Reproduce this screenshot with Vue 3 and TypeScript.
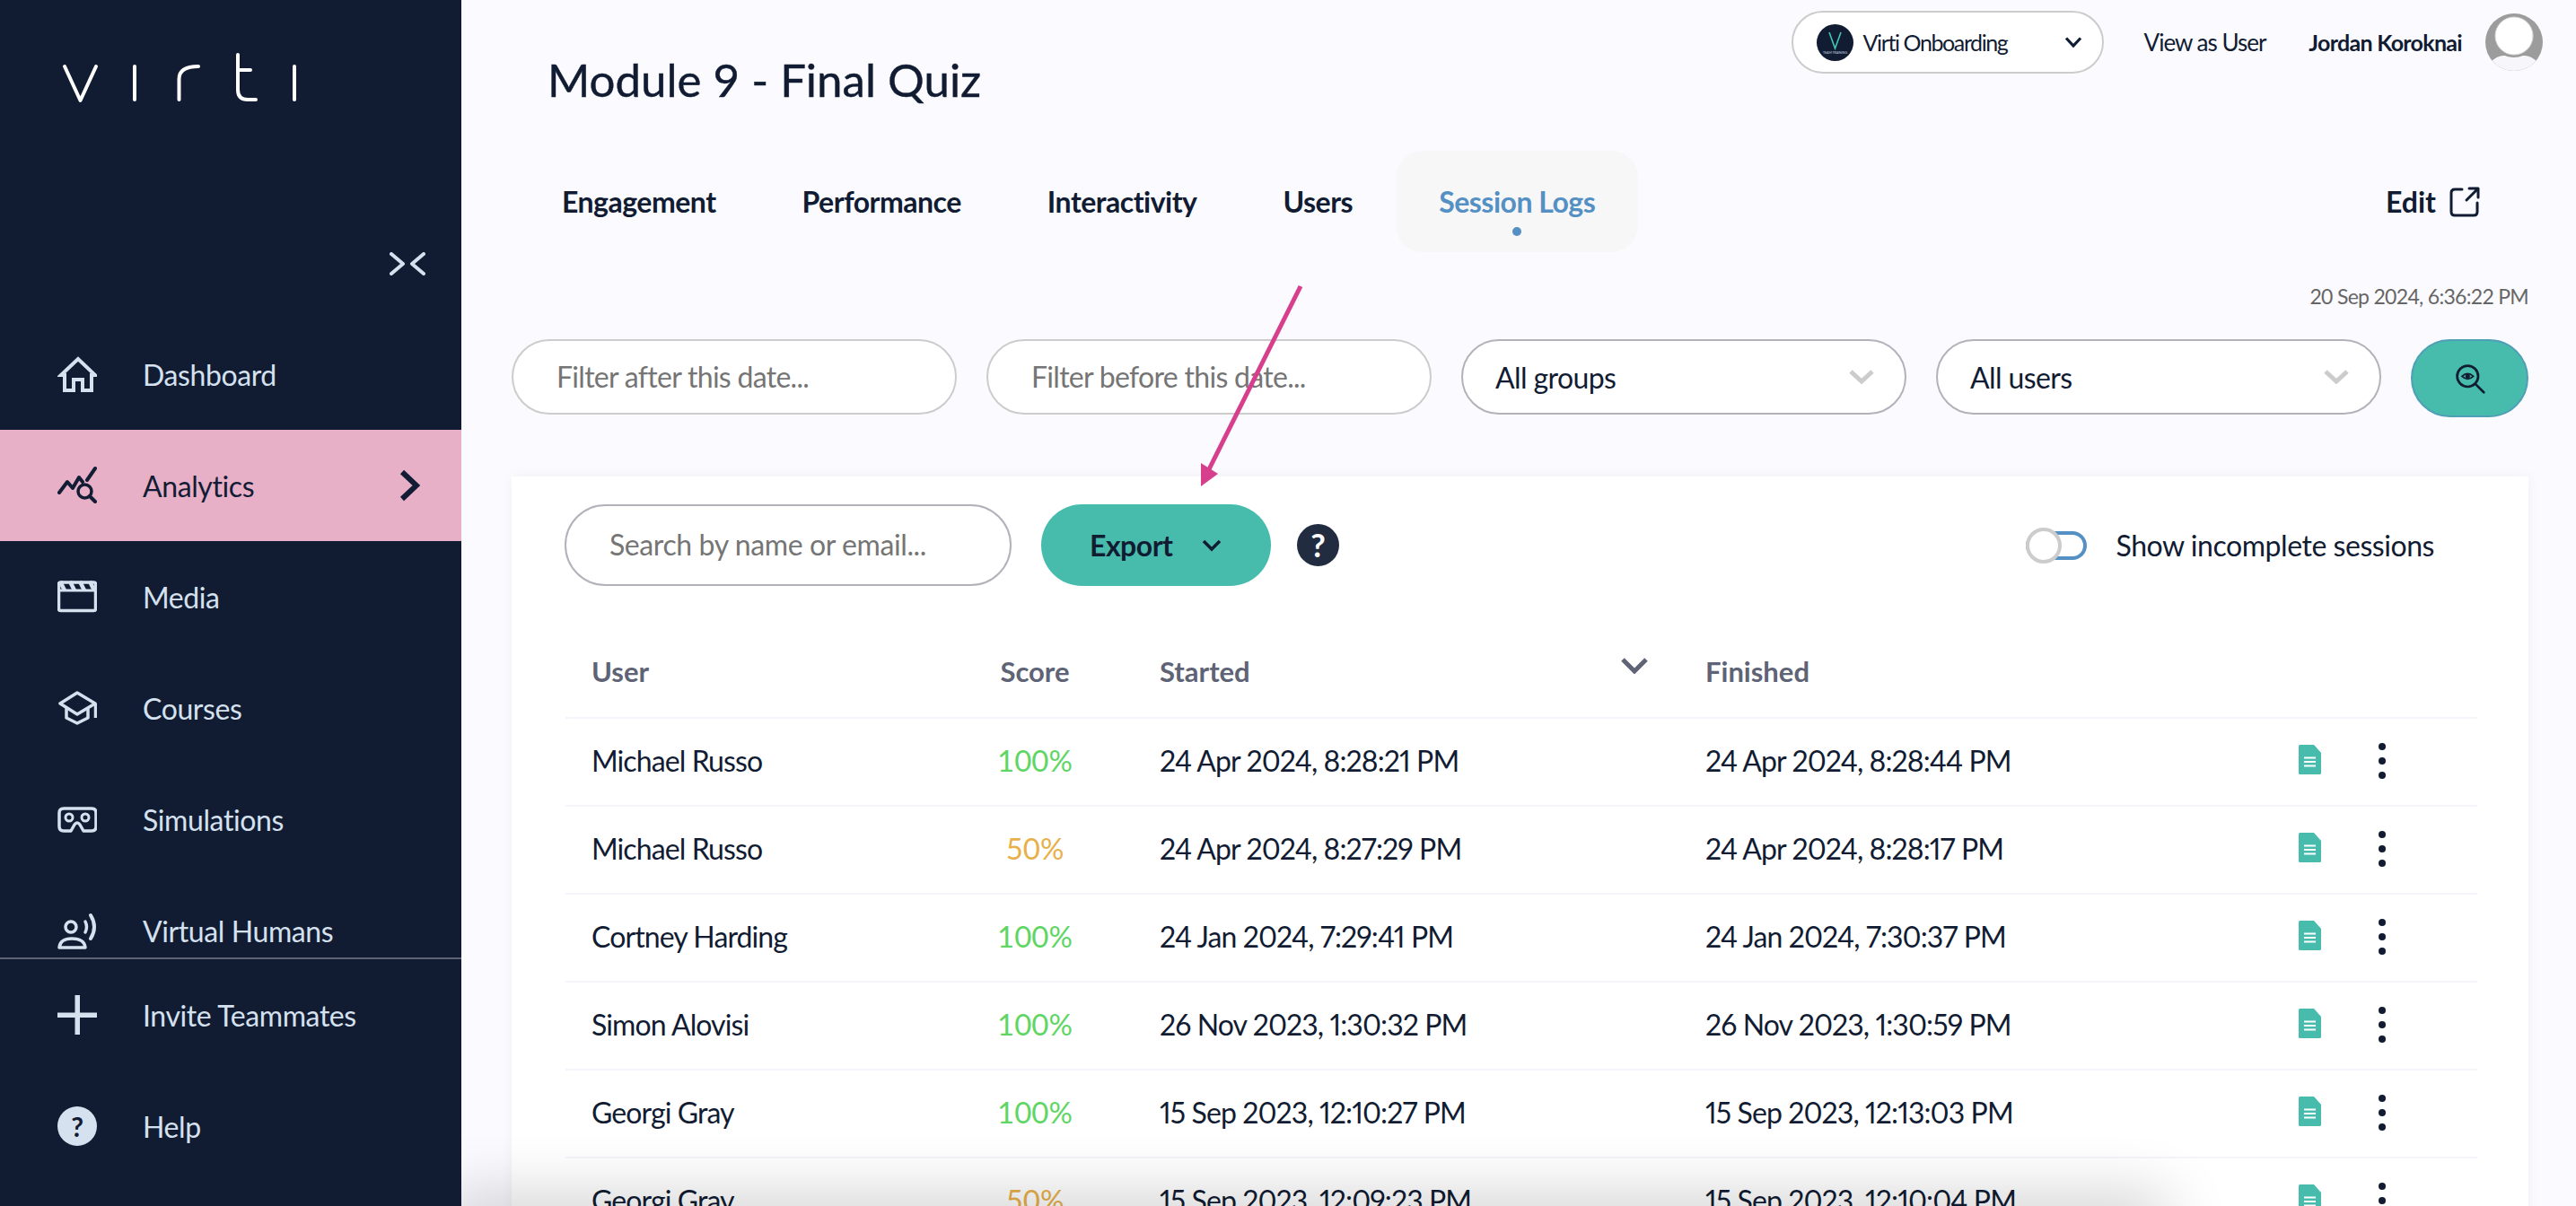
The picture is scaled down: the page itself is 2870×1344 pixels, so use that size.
<script setup lang="ts">
interface NavItem { label: string; icon: string; active?: boolean }
interface Session { user: string; score: number; started: string; finished: string }

const navItems: NavItem[] = [
  { label: 'Dashboard', icon: 'home' },
  { label: 'Analytics', icon: 'analytics', active: true },
  { label: 'Media', icon: 'media' },
  { label: 'Courses', icon: 'courses' },
  { label: 'Simulations', icon: 'simulations' },
  { label: 'Virtual Humans', icon: 'humans' }
]
const tabs: string[] = ['Engagement', 'Performance', 'Interactivity', 'Users', 'Session Logs']
const sessions: Session[] = [
  { user: 'Michael Russo', score: 100, started: '24 Apr 2024, 8:28:21 PM', finished: '24 Apr 2024, 8:28:44 PM' },
  { user: 'Michael Russo', score: 50, started: '24 Apr 2024, 8:27:29 PM', finished: '24 Apr 2024, 8:28:17 PM' },
  { user: 'Cortney Harding', score: 100, started: '24 Jan 2024, 7:29:41 PM', finished: '24 Jan 2024, 7:30:37 PM' },
  { user: 'Simon Alovisi', score: 100, started: '26 Nov 2023, 1:30:32 PM', finished: '26 Nov 2023, 1:30:59 PM' },
  { user: 'Georgi Gray', score: 100, started: '15 Sep 2023, 12:10:27 PM', finished: '15 Sep 2023, 12:13:03 PM' },
  { user: 'Georgi Gray', score: 50, started: '15 Sep 2023, 12:09:23 PM', finished: '15 Sep 2023, 12:10:04 PM' }
]
</script>

<template>
  <div class="page">
    <aside class="sidebar">
      <div class="brand">
        <svg class="logo" width="300" height="70" viewBox="60 50 300 70" fill="none" stroke="#fff" stroke-width="4" stroke-linecap="round" stroke-linejoin="round">
          <path d="M72 74 L89.500 112 L107 74" />
          <path d="M150 74 V111" />
          <path d="M199.500 111 V88 Q199.500 74 221 74" />
          <path d="M265 61 V100 Q265 111 276 111 H285 M265 78 H279" />
          <path d="M328 74 V111" />
        </svg>
        <svg class="collapse" width="40" height="26" viewBox="0 0 40 26" fill="none" stroke="#d5e1ee" stroke-width="4" stroke-linecap="round" stroke-linejoin="round">
          <path d="M2 2 L15 13 L2 24" />
          <path d="M38 2 L25 13 L38 24" />
        </svg>
      </div>
      <nav class="nav">
        <a v-for="item in navItems" :key="item.label" class="nav-item" :class="{ active: item.active }">
          <svg class="nav-icon" viewBox="-1 0 44 44" fill="none" stroke="currentColor" stroke-width="3.500" stroke-linejoin="round" stroke-linecap="round">
            <template v-if="item.icon === 'home'">
              <path stroke-width="4" stroke-linecap="butt" stroke-linejoin="miter" d="M3 23 L22 5 L41 23 H37 V40 H27 V28 H17 V40 H7 V23 Z" />
            </template>
            <template v-else-if="item.icon === 'analytics'">
              <path stroke-width="4" d="M1 30 L10 18 L16 25 L23 13 L27 18" />
              <path stroke-width="4" d="M32 16 L41 3" />
              <circle stroke-width="3.500" cx="29.500" cy="28.500" r="7.500" />
              <path stroke-width="4" d="M35 34 L41 40" />
            </template>
            <template v-else-if="item.icon === 'media'">
              <rect x="0.500" y="6" width="41" height="31.500" rx="2" />
              <path stroke-width="3" d="M0 15 H42" />
              <path stroke-width="4.500" stroke-linecap="butt" d="M2 5 L7 15 M13 5 L18 15 M24 5 L29 15 M35 5 L40 15" />
            </template>
            <template v-else-if="item.icon === 'courses'">
              <path d="M21 5 L2 17 L21 29 L41 17 Z" />
              <path d="M9 23 V33 L21 39 L33 33 V23" />
              <path stroke-linecap="butt" d="M41.500 17 V33" />
            </template>
            <template v-else-if="item.icon === 'simulations'">
              <path d="M6 10 H37 Q42 10 42 15 V30 Q42 35 37 35 H28 L24 28 Q21 24 18 28 L14 35 H6 Q1 35 1 30 V15 Q1 10 6 10 Z" />
              <circle cx="12" cy="20" r="4" stroke-width="3" />
              <circle cx="30" cy="20" r="4" stroke-width="3" />
            </template>
            <template v-else>
              <circle cx="14" cy="18" r="6" />
              <path d="M1 41 Q2 31 15 31 Q29 31 30 41 Z" />
              <path d="M30 12 Q33 18 30 24" />
              <path stroke-width="4" d="M36 5 Q44 18 36 31" />
            </template>
          </svg>
          <span class="nav-label">{{ item.label }}</span>
          <svg v-if="item.active" class="nav-chevron" width="23" height="36" viewBox="0 0 23 36" fill="none" stroke="currentColor" stroke-width="6" stroke-linejoin="miter">
            <path d="M3 3 L19 18 L3 33" />
          </svg>
        </a>
      </nav>
      <div class="side-foot">
        <a class="nav-item">
          <svg class="nav-icon" viewBox="0 0 44 44" fill="currentColor">
            <rect x="0" y="19.500" width="44" height="5.500" />
            <rect x="19.500" y="0" width="5.500" height="44" />
          </svg>
          <span class="nav-label">Invite Teammates</span>
        </a>
        <a class="nav-item">
          <span class="help-disc">?</span>
          <span class="nav-label">Help</span>
        </a>
      </div>
    </aside>

    <main class="main">
      <header class="header">
        <h1 class="title">Module 9 - Final Quiz</h1>
        <div class="topbar">
          <div class="org">
            <svg class="org-logo" width="41" height="41" viewBox="0 0 41 41">
              <circle cx="20.500" cy="20.500" r="20.500" fill="#111c33" />
              <path d="M14 9 L20.500 27 L27 9" fill="none" stroke="#3fc9b4" stroke-width="1.600" />
              <text x="20.500" y="33" text-anchor="middle" font-size="3.500" fill="#cfd6e0">TEAM TRAINING</text>
            </svg>
            <span class="org-name">Virti Onboarding</span>
            <svg class="org-chevron" width="20" height="12" viewBox="0 0 20 12" fill="none" stroke="#111c33" stroke-width="3.200">
              <path d="M2 1.500 L10 10 L18 1.500" />
            </svg>
          </div>
          <span class="view-as">View as User</span>
          <span class="person">Jordan Koroknai</span>
          <svg class="avatar" width="64" height="64" viewBox="0 0 64 64">
            <defs>
              <clipPath id="avatar-clip"><circle cx="32" cy="32" r="32" /></clipPath>
            </defs>
            <g clip-path="url(#avatar-clip)">
              <rect width="64" height="64" fill="#9c9c9c" />
              <path d="M6 54 Q14 46 22 47 Q32 51 42 47 Q50 46 58 54 V64 H6 Z" fill="#f7f7fb" />
              <circle cx="32" cy="25" r="21" fill="#fff" stroke="#d8d8d8" stroke-width="1" />
            </g>
          </svg>
        </div>
      </header>

      <div class="tabs">
        <button
          v-for="tab in tabs"
          :key="tab"
          class="tab"
          :class="{ current: tab === 'Session Logs' }"
        >{{ tab }}</button>
        <a class="edit">
          <span>Edit</span>
          <svg width="34" height="34" viewBox="0 0 34 34" fill="none" stroke="#111c33" stroke-width="3" stroke-linecap="round" stroke-linejoin="round">
            <path d="M14 3 H6 Q2 3 2 7 V28 Q2 32 6 32 H27 Q31 32 31 28 V18" />
            <path d="M19 15 L31 3 M22 2 H32 V12" />
          </svg>
        </a>
      </div>

      <div class="stamp">20 Sep 2024, 6:36:22 PM</div>

      <div class="filters">
        <input class="pill-input" type="text" placeholder="Filter after this date..." />
        <input class="pill-input" type="text" placeholder="Filter before this date..." />
        <div class="pill-select">
          <span>All groups</span>
          <svg width="28" height="16" viewBox="0 0 28 16" fill="none" stroke="#cccccc" stroke-width="5"><path d="M2 2 L14 13 L26 2" /></svg>
        </div>
        <div class="pill-select">
          <span>All users</span>
          <svg width="28" height="16" viewBox="0 0 28 16" fill="none" stroke="#cccccc" stroke-width="5"><path d="M2 2 L14 13 L26 2" /></svg>
        </div>
        <button class="search-btn" aria-label="Search">
          <svg width="36" height="36" viewBox="0 0 40 40" fill="none" stroke="#111c33" stroke-width="3" stroke-linecap="round">
            <circle cx="17" cy="17" r="13" />
            <path d="M26.500 26.500 L37 37" />
            <path stroke-width="2" d="M10 17 Q17 10.500 24 17 Q17 23.500 10 17 Z" />
            <circle cx="17" cy="17" r="2.800" fill="#111c33" stroke="none" />
          </svg>
        </button>
      </div>

      <section class="card">
        <div class="toolbar">
          <input class="pill-input search" type="text" placeholder="Search by name or email..." />
          <button class="export">
            <span>Export</span>
            <svg width="24" height="14" viewBox="0 0 24 14" fill="none" stroke="#111c33" stroke-width="3.500">
              <path d="M3 2 L12 11 L21 2" />
            </svg>
          </button>
          <span class="help-dark">?</span>
          <label class="toggle-wrap">
            <span class="toggle"><span class="knob"></span></span>
            <span>Show incomplete sessions</span>
          </label>
        </div>

        <div class="grid head">
          <span>User</span>
          <span class="score-cell">Score</span>
          <span class="started">
            Started
            <svg width="30" height="18" viewBox="0 0 30 18" fill="none" stroke="#5e6375" stroke-width="5"><path d="M2 2 L15 15 L28 2" /></svg>
          </span>
          <span>Finished</span>
          <span></span>
          <span></span>
        </div>

        <div v-for="(s, i) in sessions" :key="i" class="grid row">
          <span>{{ s.user }}</span>
          <span class="score-cell" :class="s.score === 100 ? 'good' : 'mid'">{{ s.score }}%</span>
          <span class="date">{{ s.started }}</span>
          <span class="date">{{ s.finished }}</span>
          <svg class="doc" width="25" height="33" viewBox="0 0 25 33">
            <path d="M1.500 0 H17 L25 9 V31.500 Q25 33 23.500 33 H1.500 Q0 33 0 31.500 V1.500 Q0 0 1.500 0 Z" fill="#47bcac" />
            <path d="M6 14.500 H19 M6 19 H19 M6 23.500 H19" stroke="#fff" stroke-width="2" />
          </svg>
          <span class="dots"><i></i><i></i><i></i></span>
        </div>
      </section>

      <div class="bottom-shade"></div>
    </main>

    <svg class="annotation" width="2870" height="1344" viewBox="0 0 2870 1344">
      <path d="M1449 319 L1346 525" stroke="#d63f8c" stroke-width="5" fill="none" />
      <path d="M1338 542 L1338 516 L1357 528 Z" fill="#d63f8c" />
    </svg>
  </div>
</template>

<style>
html, body { margin: 0; padding: 0; background: #fbfbff; }
</style>

<style scoped>
.page {
  position: relative;
  display: flex;
  width: 2870px;
  height: 1344px;
  overflow: hidden;
  font-family: Lato, "Open Sans", sans-serif;
  color: #111c33;
  background: #fbfbff;
}
.sidebar {
  position: relative;
  z-index: 2;
  flex: 0 0 514px;
  display: flex;
  flex-direction: column;
  background: #111c33;
  color: #d5e1ee;
}
.brand { position: relative; flex: 0 0 355px; }
.logo { display: block; margin: 50px 0 0 60px; }
.collapse { display: block; margin: 161px 0 0 434px; }
.nav {
  flex: 0 0 712px;
  overflow: hidden;
  border-bottom: 2px solid #5c6376;
}
.nav-item {
  display: flex;
  align-items: center;
  height: 124px;
  padding-left: 64px;
  font-size: 32px;
  letter-spacing: -0.4px;
  color: #d5e1ee;
}
.nav-item.active { background: #e8b0c7; color: #131c35; }
.nav-icon { flex: 0 0 44px; width: 44px; height: 44px; }
.nav-label { margin-left: 51px; flex: 1; }
.nav-chevron { margin-right: 46px; }
.help-disc {
  flex: 0 0 44px;
  width: 44px;
  height: 44px;
  border-radius: 50%;
  background: #d5e1ee;
  color: #111c33;
  font-size: 30px;
  font-weight: 700;
  line-height: 44px;
  text-align: center;
}
.main {
  position: relative;
  flex: 1;
  min-width: 0;
  padding: 0 53px 0 56px;
  overflow: hidden;
}
.header {
  display: flex;
  justify-content: space-between;
  align-items: flex-start;
  height: 168px;
  padding-top: 12px;
  box-sizing: border-box;
}
.title {
  margin: 46px 0 0 40px;
  font-size: 51px;
  font-weight: 400;
  line-height: 62px;
  color: #111c33;
  -webkit-text-stroke: 0.4px #111c33;
}
.topbar {
  display: flex;
  align-items: center;
  height: 70px;
  margin-right: -16px;
  font-size: 26px;
}
.org {
  display: flex;
  align-items: center;
  width: 348px;
  height: 70px;
  box-sizing: border-box;
  padding: 0 22px 0 26px;
  background: #fff;
  border: 2px solid #cccccc;
  border-radius: 35px;
}
.org-logo { flex: none; }
.org-name { flex: 1; margin-left: 11px; font-size: 25px; letter-spacing: -1.4px; }
.view-as { margin-left: 45px; letter-spacing: -1px; }
.person { margin-left: 48px; font-weight: 700; font-size: 25px; letter-spacing: -0.7px; }
.avatar { margin-left: 26px; }
.tabs {
  display: flex;
  align-items: center;
  height: 113px;
  margin-left: 8px;
}
.tab {
  height: 113px;
  padding: 0 48px;
  border: 0;
  background: none;
  font: 700 32px Lato, sans-serif;
  letter-spacing: -0.5px;
  color: #111c33;
}
.tab.current {
  position: relative;
  background: #f7f7f8;
  border-radius: 30px;
  color: #5590c4;
}
.tab.current::after {
  content: "";
  position: absolute;
  left: 50%;
  top: 85px;
  width: 10px;
  height: 10px;
  margin-left: -5px;
  border-radius: 50%;
  background: #5590c4;
}
.edit {
  display: flex;
  align-items: center;
  gap: 15px;
  margin-left: auto;
  margin-right: 54px;
  font-size: 32px;
  font-weight: 700;
}
.stamp {
  margin-top: 36px;
  height: 26px;
  line-height: 26px;
  text-align: right;
  font-size: 23px;
  letter-spacing: -0.7px;
  color: #666;
}
.filters {
  display: flex;
  align-items: flex-start;
  gap: 33px;
  margin-top: 35px;
  height: 87px;
}
.pill-input {
  flex: none;
  width: 496px;
  height: 84px;
  box-sizing: border-box;
  padding: 0 48px 2px;
  background: #fff;
  border: 2px solid #cccccc;
  border-radius: 42px;
  outline: none;
  font: 400 32px Lato, sans-serif;
  letter-spacing: -0.7px;
  color: #111c33;
}
.pill-input::placeholder { color: #757575; opacity: 1; }
.pill-select {
  flex: none;
  display: flex;
  align-items: center;
  justify-content: space-between;
  width: 496px;
  height: 84px;
  box-sizing: border-box;
  padding: 0 34px 0 36px;
  background: #fff;
  border: 2px solid #b2b2bb;
  border-radius: 42px;
  font-size: 32px;
  letter-spacing: -0.6px;
}
.search-btn {
  flex: none;
  display: flex;
  align-items: center;
  justify-content: center;
  width: 131px;
  height: 87px;
  padding: 0;
  background: #47bcac;
  border: 2px solid #4f9fb6;
  border-radius: 44px;
}
.card {
  margin-top: 66px;
  padding: 31px 57px 0 60px;
  background: #fff;
  box-shadow: 0 0 12px rgba(30, 40, 90, 0.06);
}
.toolbar {
  display: flex;
  align-items: center;
  height: 91px;
  margin-left: -1px;
  padding-right: 48px;
}
.pill-input.search {
  width: 498px;
  height: 91px;
  border-color: #b2b2bb;
  border-radius: 46px;
  letter-spacing: -0.4px;
}
.export {
  display: flex;
  align-items: center;
  gap: 31px;
  width: 256px;
  height: 91px;
  margin-left: 33px;
  padding: 0 0 0 54px;
  background: #47bcac;
  border: 0;
  border-radius: 46px;
  font: 700 32px Lato, sans-serif;
  letter-spacing: -0.5px;
  color: #111c33;
}
.help-dark {
  width: 47px;
  height: 47px;
  margin-left: 29px;
  border-radius: 50%;
  background: #222c40;
  color: #fff;
  font-size: 36px;
  font-weight: 700;
  line-height: 47px;
  text-align: center;
}
.toggle-wrap {
  display: flex;
  align-items: center;
  gap: 33px;
  margin-left: auto;
  font-size: 32px;
  letter-spacing: -0.45px;
}
.toggle {
  position: relative;
  display: block;
  width: 68px;
  height: 32px;
  margin-left: 0;
  box-sizing: border-box;
  border: 4px solid #5590c4;
  border-radius: 16px;
  background: #fff;
}
.knob {
  position: absolute;
  left: -4px;
  top: -8px;
  width: 40px;
  height: 40px;
  box-sizing: border-box;
  border: 4px solid #cccccc;
  border-radius: 50%;
  background: #fff;
}
.grid {
  display: grid;
  grid-template-columns: 444px 189px 608px 661px 89px 8px;
  align-items: center;
  padding-left: 29px;
  box-sizing: border-box;
  font-size: 32px;
}
.head {
  height: 99px;
  margin-top: 47px;
  padding-bottom: 3px;
  color: #5e6375;
  font-weight: 700;
  font-size: 31px;
}
.row {
  height: 98px;
  padding-bottom: 4px;
  border-top: 2px solid #f4f4fd;
  letter-spacing: -0.9px;
}
.score-cell { width: 100px; text-align: center; letter-spacing: 0; }
.row .score-cell { font-size: 33px; }
.date { font-variant-numeric: proportional-nums; }
.started {
  display: flex;
  align-items: center;
  justify-content: space-between;
  padding-right: 64px;
}
.started svg { margin-top: -13px; }
.good { color: #5fd664; }
.mid { color: #e8b04a; }
.doc { margin-top: -2px; }
.dots {
  display: flex;
  flex-direction: column;
  gap: 8px;
  margin-top: 2px;
}
.dots i {
  display: block;
  width: 8px;
  height: 8px;
  border-radius: 50%;
  background: #111c33;
}
.bottom-shade {
  position: absolute;
  left: -10px;
  bottom: -40px;
  width: 1900px;
  height: 40px;
  box-shadow: 0 0 70px 10px rgba(0, 0, 0, 0.2);
}
.annotation {
  position: absolute;
  left: 0;
  top: 0;
  z-index: 3;
  pointer-events: none;
}
</style>
